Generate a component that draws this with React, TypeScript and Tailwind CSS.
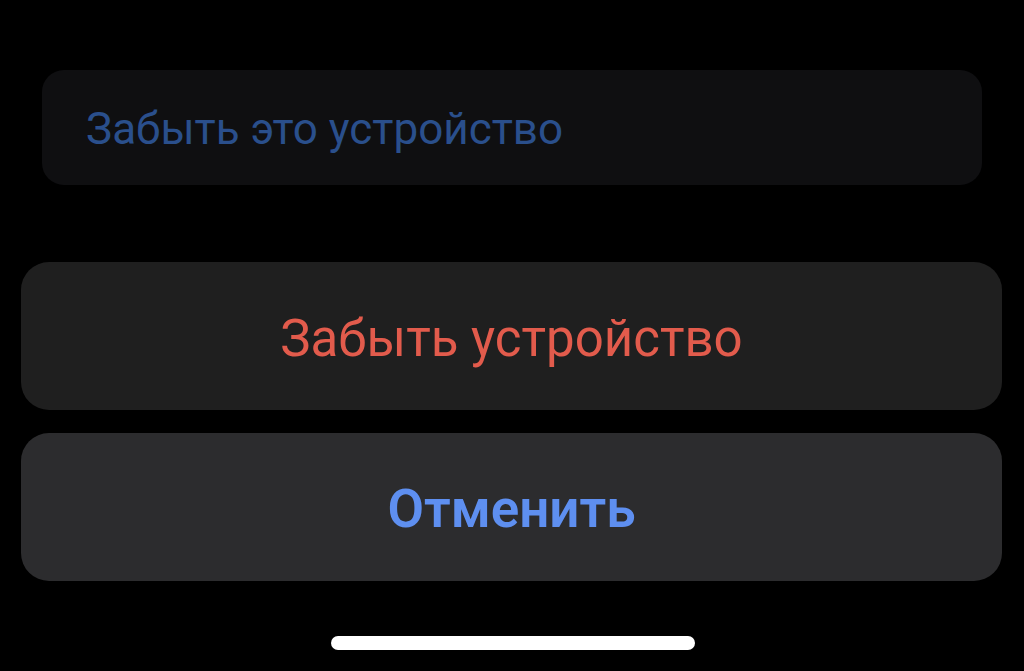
export default function App() {
  return (
    <div
      className="w-[1024px] h-[671px] bg-black flex flex-col overflow-hidden"
      style={{ fontFamily: 'Roboto, "Noto Sans", sans-serif' }}
    >
      <div className="ml-[42px] mt-[70px] w-[940px] h-[115px] rounded-[22px] bg-[#0f0f11] flex items-center pl-[44px]">
        <span className="text-[44px] leading-none text-[#2a4f8c] pt-[3px]">Забыть это устройство</span>
      </div>
      <div className="ml-[21px] mt-[77px] w-[981px] h-[148px] rounded-[28px] bg-[#1f1f1f] flex items-center justify-center">
        <span className="text-[51px] leading-none text-[#e25b4c] pt-[4px]">Забыть устройство</span>
      </div>
      <div className="ml-[21px] mt-[23px] w-[981px] h-[148px] rounded-[28px] bg-[#2c2c2e] flex items-center justify-center">
        <span className="text-[53px] leading-none font-semibold text-[#5e8ff0] pt-[4px]">Отменить</span>
      </div>
      <div className="mt-[55px] ml-[331px] w-[364px] h-[14px] rounded-full bg-white" />
    </div>
  );
}
